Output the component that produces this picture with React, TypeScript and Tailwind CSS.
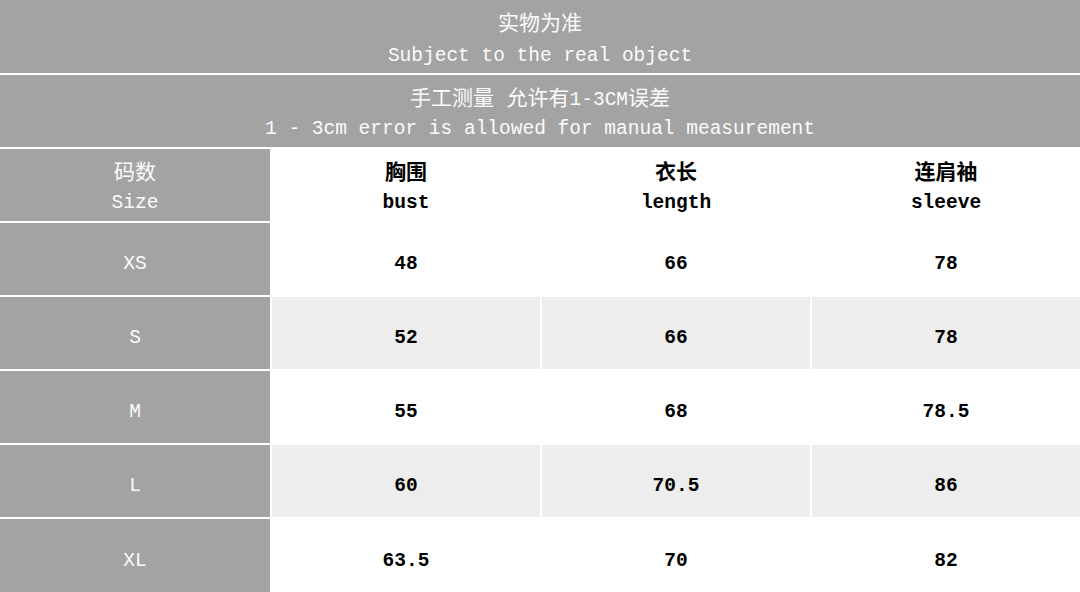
import React from "react";

const FONT = { fontFamily: "'Liberation Mono', 'Noto Sans CJK SC', monospace" };

const Cjk = ({ children }: { children: React.ReactNode }) => (
  <span className="text-[21px]">{children}</span>
);

const rows = [
  ["XS", "48", "66", "78"],
  ["S", "52", "66", "78"],
  ["M", "55", "68", "78.5"],
  ["L", "60", "70.5", "86"],
  ["XL", "63.5", "70", "82"],
];

export default function App() {
  return (
    <div
      className="w-[1080px] h-[592px] bg-white flex flex-col text-[19.5px] leading-[29px] overflow-hidden"
      style={FONT}
    >
      <div className="h-[73px] bg-[#a3a3a3] text-[#fbfbfb] flex flex-col items-center justify-center pt-[7px]">
        <div>
          <Cjk>实物为准</Cjk>
        </div>
        <div className="mt-[2px]">Subject to the real object</div>
      </div>
      <div className="h-[74px] border-t-2 border-white bg-[#a3a3a3] text-[#fbfbfb] flex flex-col items-center justify-center pt-[6px]">
        <div>
          <Cjk>手工测量 允许有</Cjk>1-3CM<Cjk>误差</Cjk>
        </div>
        <div>1 - 3cm error is allowed for manual measurement</div>
      </div>
      <div className="h-[74px] border-t-2 border-white grid grid-cols-[270px_1fr_1fr_1fr] gap-x-[2px] bg-white">
        <div className="bg-[#a3a3a3] text-[#fbfbfb] flex flex-col items-center justify-center pt-[6px]">
          <div>
            <Cjk>码数</Cjk>
          </div>
          <div>Size</div>
        </div>
        {[
          ["胸围", "bust"],
          ["衣长", "length"],
          ["连肩袖", "sleeve"],
        ].map(([zh, en]) => (
          <div key={en} className="bg-white text-black font-bold flex flex-col items-center justify-center pt-[6px]">
            <div>
              <Cjk>{zh}</Cjk>
            </div>
            <div>{en}</div>
          </div>
        ))}
      </div>
      {rows.map((r, i) => {
        const bg = i % 2 === 1 ? "bg-[#ededed]" : "bg-white";
        return (
          <div
            key={r[0]}
            className={`${i === rows.length - 1 ? "h-[75px]" : "h-[74px]"} border-t-2 border-white grid grid-cols-[270px_1fr_1fr_1fr] gap-x-[2px] bg-white`}
          >
            <div className="bg-[#a3a3a3] text-[#fbfbfb] flex items-center justify-center pt-[11px]">
              {r[0]}
            </div>
            {r.slice(1).map((v, j) => (
              <div
                key={j}
                className={`${bg} text-black font-bold flex items-center justify-center pt-[11px]`}
              >
                {v}
              </div>
            ))}
          </div>
        );
      })}
    </div>
  );
}
